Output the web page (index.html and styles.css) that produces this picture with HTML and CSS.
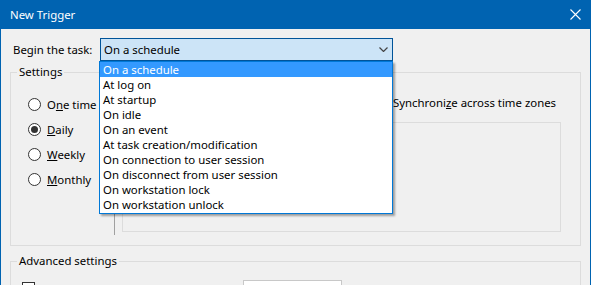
FILE: index.html
```html
<!DOCTYPE html>
<html lang="en">

<head>
    <meta charset="UTF-8">
    <title>New Trigger</title>
    <link rel="stylesheet" href="styles.css">
</head>

<body>
    <div class="window">
        <header class="titlebar">
            <span class="title">New Trigger</span>
            <svg class="close" width="11" height="11" viewBox="0 0 11 11">
                <path d="M0.5 0.5 L10.5 10.5 M10.5 0.5 L0.5 10.5" stroke="#fff" stroke-width="1.1" fill="none" />
            </svg>
        </header>

        <main class="content">
            <div class="task-row">
                <label class="task-label">Begin the task:</label>
                <div class="combo">
                    <span>On a schedule</span>
                    <svg class="chevron" width="9" height="5" viewBox="0 0 9 5">
                        <polyline points="0.5,0.5 4.5,4.5 8.5,0.5" stroke="#444" stroke-width="1.2" fill="none" />
                    </svg>
                </div>
            </div>

            <fieldset class="group settings">
                <legend>Settings</legend>
                <div class="settings-body">
                    <div class="schedule-types">
                        <div class="radio-row"><span class="radio"></span><span>O<u>n</u>e time</span></div>
                        <div class="radio-row"><span class="radio checked"></span><span><u>D</u>aily</span></div>
                        <div class="radio-row"><span class="radio"></span><span><u>W</u>eekly</span></div>
                        <div class="radio-row"><span class="radio"></span><span><u>M</u>onthly</span></div>
                    </div>
                    <div class="separator"></div>
                    <div class="schedule-detail">
                        <div class="start-row">
                            <span class="checkbox"></span>
                            <span>Synchroni<u>z</u>e across time zones</span>
                        </div>
                        <div class="detail-box"></div>
                    </div>
                </div>
            </fieldset>

            <fieldset class="group advanced">
                <legend>Advanced settings</legend>
                <div class="advanced-body">
                    <span class="checkbox"></span>
                    <span class="textbox"></span>
                </div>
            </fieldset>
        </main>

        <ul class="dropdown">
            <li class="selected">On a schedule</li>
            <li>At log on</li>
            <li>At startup</li>
            <li>On idle</li>
            <li>On an event</li>
            <li>At task creation/modification</li>
            <li>On connection to user session</li>
            <li>On disconnect from user session</li>
            <li>On workstation lock</li>
            <li>On workstation unlock</li>
        </ul>
    </div>
</body>

</html>
```

FILE: styles.css
```css
* {
    margin: 0;
    padding: 0;
    box-sizing: border-box;
}

body {
    font-family: 'Noto Sans', 'Liberation Sans', sans-serif;
    font-size: 11.4px;
    color: #000;
    background: #f0f0f0;
}

.window {
    position: relative;
    width: 591px;
    height: 285px;
    overflow: hidden;
    background: #f0f0f0;
    border-left: 1px solid #0063b1;
    border-right: 1px solid #0063b1;
}

.titlebar {
    height: 29px;
    background: #0063b1;
    color: #fff;
    display: flex;
    align-items: center;
    justify-content: space-between;
    padding: 0 9px 0 9px;
}

.title {
    line-height: 16px;
}

.close {
    display: block;
    margin-top: -1px;
}

.content {
    padding-left: 9px;
}

.task-row {
    display: flex;
    align-items: center;
    margin-top: 9px;
    padding-left: 3px;
}

.task-label {
    width: 87px;
}

.combo {
    width: 293px;
    height: 23px;
    background: #cce4f7;
    border: 1px solid #005499;
    display: flex;
    align-items: center;
    justify-content: space-between;
    padding: 0 4px 0 3px;
}

.chevron {
    display: block;
}

.group {
    width: 571px;
    border: 1px solid #dcdcdc;
    padding: 0;
}

.group legend {
    margin-left: 6px;
    padding: 0 2px;
    line-height: 16px;
}

.settings {
    margin-top: 3px;
    padding-bottom: 10px;
}

.settings-body {
    display: flex;
}

.schedule-types {
    width: 103px;
    padding: 12px 0 0 17px;
}

.radio-row {
    display: flex;
    align-items: center;
    gap: 6px;
    height: 25px;
}

.radio {
    width: 13px;
    height: 13px;
    border: 1px solid #333;
    border-radius: 50%;
    background: #fff;
    display: flex;
    align-items: center;
    justify-content: center;
}

.radio.checked::after {
    content: '';
    width: 7px;
    height: 7px;
    border-radius: 50%;
    background: #333;
}

.separator {
    width: 1px;
    margin-top: 12px;
    height: 143px;
    background: #a0a0a0;
}

.schedule-detail {
    padding-left: 7px;
    padding-top: 13px;
}

.start-row {
    display: flex;
    align-items: center;
    height: 18px;
    padding-left: 255px;
}

.start-row .checkbox {
    margin-right: 3px;
}

.checkbox {
    display: block;
    width: 13px;
    height: 13px;
    border: 1px solid #333;
    background: #fff;
}

.detail-box {
    margin-top: 11px;
    width: 439px;
    height: 110px;
    border: 1px solid #dcdcdc;
}

.advanced {
    margin-top: 7px;
    height: 60px;
}

.advanced-body {
    display: flex;
    align-items: flex-start;
    padding: 11px 0 0 11px;
}

.advanced-body .checkbox {
    margin-top: 2px;
}

.textbox {
    display: block;
    margin-left: 208px;
    width: 99px;
    height: 22px;
    background: #fff;
    border: 1px solid #c8c8c8;
}

/* open list of the combo box */
.dropdown {
    position: absolute;
    left: 98px;
    top: 61px;
    width: 294px;
    height: 153px;
    list-style: none;
    background: #fff;
    border: 1px solid #0078d7;
    box-shadow: 2px 2px 2px rgba(0, 0, 0, 0.35);
}

.dropdown li {
    height: 15px;
    line-height: 15px;
    padding-left: 3px;
    white-space: nowrap;
}

.dropdown li.selected {
    background: #3399ff;
    color: #fff;
}
```
